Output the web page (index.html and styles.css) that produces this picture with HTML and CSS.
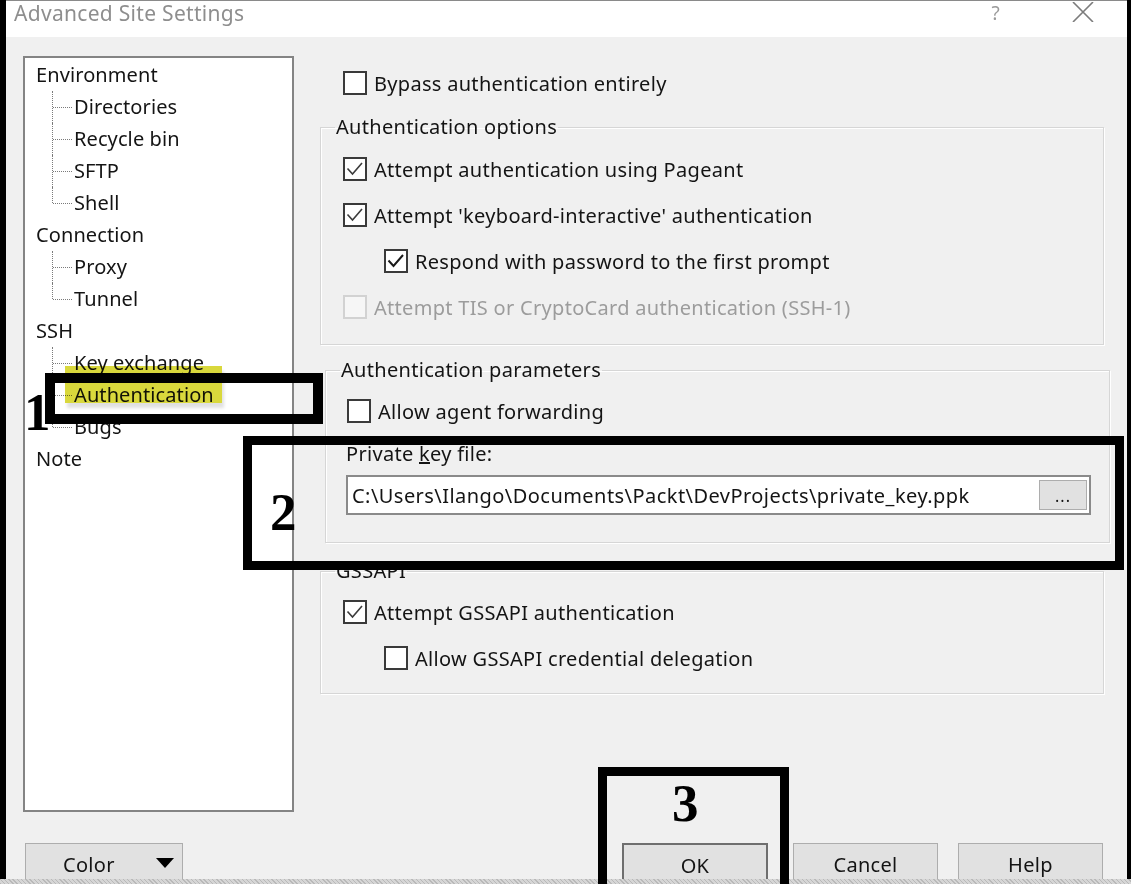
FILE: index.html
```html
<!DOCTYPE html>
<html>
<head>
<meta charset="utf-8">
<title>Advanced Site Settings</title>
<link rel="stylesheet" href="styles.css">
</head>
<body>
<div class="window">
  <div class="titlebar">
    <span class="title">Advanced Site Settings</span>
    <span class="help">?</span>
    <svg class="close" width="22" height="20" viewBox="0 0 22 20"><path d="M1 0 L21 20 M21 0 L1 20" stroke="#7c7c7c" stroke-width="1.6" fill="none"/></svg>
  </div>
  <div class="main">
    <div class="tree">
      <div class="node">Environment</div>
      <div class="children">
        <div class="child">Directories</div>
        <div class="child">Recycle bin</div>
        <div class="child">SFTP</div>
        <div class="child">Shell</div>
      </div>
      <div class="node">Connection</div>
      <div class="children">
        <div class="child">Proxy</div>
        <div class="child">Tunnel</div>
      </div>
      <div class="node">SSH</div>
      <div class="children">
        <div class="child">Key exchange</div>
        <div class="child">Authentication</div>
        <div class="child">Bugs</div>
      </div>
      <div class="node">Note</div>
    </div>
    <div class="panel">
      <div class="cbrow top-row"><span class="cb"></span><span>Bypass authentication entirely</span></div>
      <fieldset class="group g1">
        <legend>Authentication options</legend>
        <div class="rows">
          <div class="cbrow row"><span class="cb"><svg viewBox="0 0 20 20"><polyline points="2.5,9.5 7.5,15 17,4"/></svg></span><span>Attempt authentication using Pageant</span></div>
          <div class="cbrow row"><span class="cb"><svg viewBox="0 0 20 20"><polyline points="2.5,9.5 7.5,15 17,4"/></svg></span><span>Attempt 'keyboard-interactive' authentication</span></div>
          <div class="cbrow row indent"><span class="cb dark"><svg viewBox="0 0 20 20"><polyline points="2.5,9.5 7.5,15 17,4"/></svg></span><span>Respond with password to the first prompt</span></div>
          <div class="cbrow row disabled"><span class="cb"></span><span>Attempt TIS or CryptoCard authentication (SSH-1)</span></div>
        </div>
      </fieldset>
      <fieldset class="group g2">
        <legend>Authentication parameters</legend>
        <div class="rows">
          <div class="cbrow row"><span class="cb"></span><span>Allow agent forwarding</span></div>
          <div class="field-label">Private <u>k</u>ey file:</div>
          <div class="input">
            <span class="input-text">C:\Users\Ilango\Documents\Packt\DevProjects\private_key.ppk</span>
            <span class="browse">...</span>
          </div>
        </div>
      </fieldset>
      <fieldset class="group g3">
        <legend>GSSAPI</legend>
        <div class="rows">
          <div class="cbrow row"><span class="cb"><svg viewBox="0 0 20 20"><polyline points="2.5,9.5 7.5,15 17,4"/></svg></span><span>Attempt GSSAPI authentication</span></div>
          <div class="cbrow row indent"><span class="cb"></span><span>Allow GSSAPI credential delegation</span></div>
        </div>
      </fieldset>
    </div>
  </div>
  <div class="footer">
    <div class="btn color-btn"><span>Color</span><span class="arrow"></span></div>
    <div class="btn ok">OK</div>
    <div class="btn cancel">Cancel</div>
    <div class="btn help-btn">Help</div>
  </div>
</div>
<div class="strip"></div>

<div class="highlight"></div>
<div class="mark mark1"></div>
<div class="mark mark2"></div>
<div class="mark mark3"></div>
<div class="num num1">1</div>
<div class="num num2">2</div>
<div class="num num3">3</div>
</body>
</html>
```

FILE: styles.css
```css
html, body {
  margin: 0;
  padding: 0;
}
body {
  width: 1131px;
  height: 884px;
  overflow: hidden;
  position: relative;
  background: #f0f0f0;
  font-family: "Noto Sans", "DejaVu Sans", sans-serif;
  font-size: 20px;
  letter-spacing: 0.3px;
  color: #141414;
}
.window {
  height: 879px;
  box-sizing: border-box;
  border-left: 6px solid #000;
  border-right: 4px solid #000;
  display: flex;
  flex-direction: column;
}
.titlebar {
  height: 37px;
  flex: none;
  box-sizing: border-box;
  background: #fff;
  border-top: 1px solid #8a8a8a;
  display: flex;
  align-items: flex-start;
}
.title {
  font-size: 21px;
  line-height: 24px;
  margin-top: 0;
  margin-left: 8px;
  color: #8e8e8e;
}
.help {
  margin-left: auto;
  font-size: 19px;
  line-height: 24px;
  margin-top: 0;
  color: #9a9a9a;
}
.close {
  margin-left: 72px;
  margin-right: 33px;
  margin-top: 1px;
}
.main {
  height: 775px;
  flex: none;
  box-sizing: border-box;
  padding-top: 19px;
  display: flex;
}
.tree {
  margin-left: 17px;
  width: 271px;
  height: 756px;
  box-sizing: border-box;
  border: 2px solid #848484;
  background: #fff;
  padding: 1px 0 0 11px;
  letter-spacing: 0.1px;
}
.node, .child {
  height: 32px;
  line-height: 32px;
  white-space: nowrap;
}
.child {
  position: relative;
  padding-left: 38px;
}
.child::before {
  content: "";
  position: absolute;
  left: 16px;
  top: 0;
  bottom: 0;
  border-left: 1px dotted #7a7a7a;
}
.child:last-child::before {
  bottom: 50%;
}
.child::after {
  content: "";
  position: absolute;
  left: 17px;
  top: 50%;
  width: 19px;
  border-top: 1px dotted #7a7a7a;
}
.panel {
  margin-left: 26px;
  width: 784px;
  display: flex;
  flex-direction: column;
}
.cbrow {
  display: flex;
  align-items: center;
  gap: 7px;
  white-space: nowrap;
}
.top-row {
  margin-top: 15px;
  padding-left: 23px;
  height: 24px;
}
.cb {
  width: 24px;
  height: 24px;
  flex: none;
  box-sizing: border-box;
  border: 2px solid #3a3a3a;
  background: #fff;
  display: block;
}
.cb svg {
  display: block;
  width: 20px;
  height: 20px;
}
.cb polyline {
  fill: none;
  stroke: #3c3c3c;
  stroke-width: 1.6;
}
.cb.dark polyline {
  stroke: #1a1a1a;
  stroke-width: 2;
}
.disabled {
  color: #9c9c9c;
}
.disabled .cb {
  border-color: #d2d2d2;
  background: #f6f6f6;
}
.group {
  margin: 19px 0 0 0;
  padding: 0 0 14px 0;
  border: 1px solid #d6d6d6;
  box-shadow: inset 1px 1px 0 #fff, 1px 1px 0 #fff;
  min-width: 0;
}
.group legend {
  margin-left: 14px;
  padding: 0 1px;
  height: 26px;
  line-height: 26px;
}
.g1 .rows {
  padding: 6px 0 0 22px;
}
.row {
  height: 46px;
}
.indent {
  padding-left: 41px;
}
.g2 {
  margin: 12px -6px 0 5px;
  padding-bottom: 27px;
}
.g2 .rows {
  padding: 5px 0 0 21px;
}
.field-label {
  margin-top: 7px;
  margin-left: -1px;
  height: 26px;
  line-height: 26px;
}
.input {
  margin-top: 8px;
  margin-left: -1px;
  width: 745px;
  height: 40px;
  box-sizing: border-box;
  border: 2px solid #8a8a8a;
  background: #fff;
  display: flex;
  align-items: center;
  padding-left: 4px;
}
.input-text {
  white-space: nowrap;
  letter-spacing: 0.45px;
}
.browse {
  margin-left: auto;
  margin-right: 2px;
  width: 48px;
  height: 30px;
  box-sizing: border-box;
  border: 1px solid #adadad;
  background: #e1e1e1;
  font-size: 16px;
  line-height: 30px;
  text-align: center;
  letter-spacing: 1px;
}
.g3 {
  margin-top: 15px;
  padding-bottom: 12px;
}
.g3 .rows {
  padding: 5px 0 0 22px;
}
.footer {
  height: 67px;
  flex: none;
  box-sizing: border-box;
  padding-top: 31px;
  display: flex;
}
.btn {
  height: 36px;
  box-sizing: border-box;
  border: 1px solid #adadad;
  border-bottom: none;
  background: #e1e1e1;
  display: flex;
  align-items: center;
  justify-content: center;
  padding-top: 6px;
}
.color-btn {
  margin-left: 19px;
  width: 158px;
  justify-content: flex-start;
  padding-left: 37px;
  padding-right: 8px;
}
.arrow {
  margin-left: auto;
  width: 0;
  height: 0;
  border-left: 9px solid transparent;
  border-right: 9px solid transparent;
  border-top: 10px solid #000;
  margin-top: -4px;
}
.ok {
  margin-left: auto;
  width: 146px;
  border: 2px solid #6e6e6e;
  border-bottom: none;
}
.cancel {
  margin-left: 25px;
  width: 145px;
}
.help-btn {
  margin-left: 20px;
  width: 145px;
  margin-right: 24px;
}
.strip {
  height: 5px;
  background: repeating-linear-gradient(45deg, #b9b9b9 0 1px, #d6d6d6 1px 3px);
}
.highlight {
  position: absolute;
  left: 65px;
  top: 366px;
  width: 157px;
  height: 37px;
  background: #d9d83c;
  mix-blend-mode: multiply;
  box-shadow: 2px 5px 3px rgba(0, 0, 0, 0.12);
}
.mark {
  position: absolute;
  border: 10px solid #000;
  box-sizing: border-box;
}
.mark1 {
  left: 45px;
  top: 373px;
  width: 278px;
  height: 51px;
}
.mark2 {
  left: 243px;
  top: 436px;
  width: 881px;
  height: 134px;
  border-width: 9px;
}
.mark3 {
  left: 598px;
  top: 767px;
  width: 191px;
  height: 130px;
  border-width: 9px;
}
.num {
  position: absolute;
  font-family: "Liberation Serif", serif;
  font-weight: bold;
  font-size: 53px;
  line-height: 53px;
  letter-spacing: 0;
  color: #000;
}
.num1 {
  left: 24px;
  top: 386px;
}
.num2 {
  left: 270px;
  top: 486px;
}
.num3 {
  left: 672px;
  top: 777px;
}
```
